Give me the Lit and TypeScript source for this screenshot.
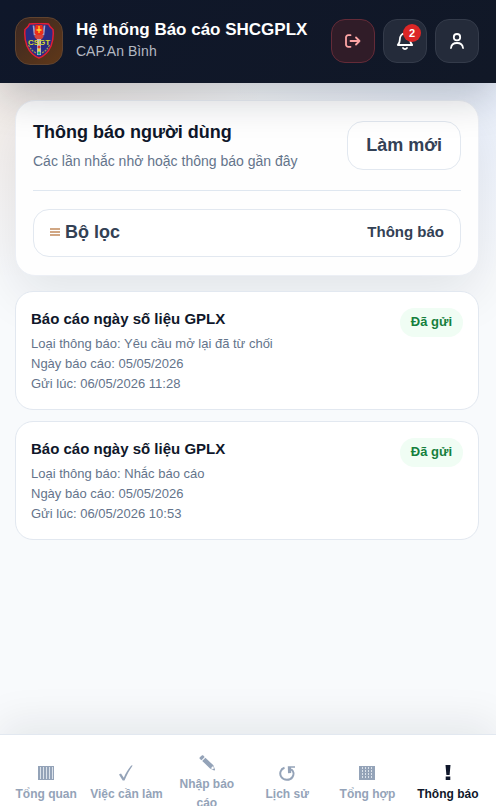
import { LitElement, html, svg, css } from "lit";
import { customElement, property } from "lit/decorators.js";
import { classMap } from "lit/directives/class-map.js";

interface Notice {
  title: string;
  kind: string;
  day: string;
  sent: string;
  status: string;
}

const notices: Notice[] = [
  { title: "Báo cáo ngày số liệu GPLX", kind: "Yêu cầu mở lại đã từ chối", day: "05/05/2026", sent: "06/05/2026 11:28", status: "Đã gửi" },
  { title: "Báo cáo ngày số liệu GPLX", kind: "Nhắc báo cáo", day: "05/05/2026", sent: "06/05/2026 10:53", status: "Đã gửi" },
];

const navIcons = {
  columns: svg`<path d="M0 1h16v14H0z" fill="currentColor"/><path d="M2.500 2v12M5.500 2v12M8.500 2v12M11.500 2v12M14.500 2v12" stroke="#dbe2ea" stroke-width="1"/>`,
  check: svg`<path d="M1 9.500l2-1 2.800 4.200C7.500 8.500 10 4.200 13.200.500h1.500C11.500 5 8.800 9.800 6.500 15.500H4.700z" fill="currentColor"/>`,
  pencil: svg`<path d="M.8 2.200 2.800.600c.5-.4 1.300-.3 1.700.1l1.200 1.300-3.200 3.200L.9 4c-.5-.5-.6-1.300-.1-1.800zM3.200 5.900l3.200-3.200 8 7.600 1.600 4.200c.2.600-.3 1.100-.9.900l-4.100-2z" fill="currentColor"/><path d="M11.800 13.200l2.300-2.200.9 2.300-1.200 1z" fill="#fff"/>`,
  history: svg`<path d="M5.500 2.800C1.500 4 .2 8.500 2.200 11.800c2.600 4 8.800 3.900 11.200.3 1.900-2.900 1.200-6.100-1.300-7.900" fill="none" stroke="currentColor" stroke-width="2"/><path d="M8.800 1.200H16v1.600h-4l.2 5.200-3.200.2z" fill="currentColor"/>`,
  grid: svg`<path d="M0 1h16v14H0z" fill="currentColor"/><path d="M3.500 2v12M6.500 2v12M9.500 2v12M12.500 2v12" stroke="#dbe2ea" stroke-width="1" stroke-dasharray="2 1"/>`,
  alert: svg`<path d="M5.500 0h5l-.9 10H6.400zM5.700 11.500h4.600V15H5.700z" fill="currentColor"/>`,
};

@customElement("notice-card")
export class NoticeCard extends LitElement {
  @property({ attribute: false }) notice!: Notice;

  static styles = css`
    :host { display: block; }
    .card {
      display: flex; align-items: flex-start; justify-content: space-between; gap: 12px;
      box-sizing: border-box; padding: 16px 15px 15px; border: 1px solid #e2e8f0;
      border-radius: 18px; background: #fff;
    }
    .title { margin: 0 0 4px; font-size: 15px; line-height: 22px; font-weight: 700; color: #0f172a; }
    .line { margin: 0; font-size: 13px; line-height: 20px; color: #64748b; }
    .badge {
      flex: none; padding: 3px 11px 5px; border-radius: 15px; background: #f0fdf4;
      color: #15803d; font-size: 13px; line-height: 21px; font-weight: 700;
    }
  `;

  render() {
    const n = this.notice;
    return html`<article class="card">
      <div>
        <h2 class="title">${n.title}</h2>
        <p class="line">Loại thông báo: ${n.kind}</p>
        <p class="line">Ngày báo cáo: ${n.day}</p>
        <p class="line">Gửi lúc: ${n.sent}</p>
      </div>
      <span class="badge">${n.status}</span>
    </article>`;
  }
}

@customElement("bottom-nav")
export class BottomNav extends LitElement {
  private items = [
    { label: "Tổng quan", icon: navIcons.columns },
    { label: "Việc cần làm", icon: navIcons.check },
    { label: "Nhập báo cáo", icon: navIcons.pencil },
    { label: "Lịch sử", icon: navIcons.history },
    { label: "Tổng hợp", icon: navIcons.grid },
    { label: "Thông báo", icon: navIcons.alert, active: true },
  ];

  static styles = css`
    :host { display: block; position: sticky; bottom: 0; z-index: 3; margin-top: auto; }
    .bar {
      box-sizing: border-box; height: 72px; overflow: hidden; padding: 14px 8px 0 6px;
      border-top: 1px solid #e2e8f0; background: #fff;
    }
    .shade { box-shadow: 0 -12px 40px rgba(15, 23, 42, 0.08); }
    .items { display: grid; grid-template-columns: repeat(6, minmax(0, 1fr)); height: 70px; }
    .item {
      display: flex; flex-direction: column; align-items: center; justify-content: center; gap: 4px;
      padding: 0 3px; color: #94a3b8; font-size: 12px; line-height: 19px; font-weight: 700;
      text-align: center; text-decoration: none;
    }
    .active { color: #0f172a; }
    .icon { width: 16px; height: 16px; flex: none; }
  `;

  render() {
    return html`<div class="shade"><nav class="bar"><div class="items">
      ${this.items.map((i) => html`<a href="#" class=${classMap({ item: true, active: !!i.active })}>
        <svg class="icon" viewBox="0 0 16 16" aria-hidden="true">${i.icon}</svg>
        <span>${i.label}</span>
      </a>`)}
    </div></nav></div>`;
  }
}

@customElement("app-root")
export class AppRoot extends LitElement {
  static styles = css`
    :host {
      display: flex; flex-direction: column; min-height: 100vh;
      font-family: "Liberation Sans", Arial, sans-serif; color: #0f172a;
      background:
        radial-gradient(circle at 0 0, rgba(180, 83, 9, 0.12), transparent 280px),
        radial-gradient(circle at 100% 0, rgba(37, 99, 235, 0.1), transparent 280px),
        #f8fafc;
    }
    .header {
      display: flex; align-items: center; position: relative; z-index: 2; box-sizing: border-box;
      height: 83px; padding: 0 17px 2px 15px; background: linear-gradient(135deg, #0f172a, #111827);
      box-shadow: 0 14px 40px rgba(15, 23, 42, 0.22);
    }
    .logo {
      display: grid; place-items: center; flex: none; box-sizing: border-box; width: 48px; height: 48px;
      border: 1px solid #60432f; border-radius: 15px; background: linear-gradient(135deg, #3b2823, #603818);
    }
    .brand { flex: 1; min-width: 0; margin-left: 13px; padding-bottom: 2px; }
    .name { margin: 0; font-size: 17px; line-height: 22px; font-weight: 700; color: #fff; white-space: nowrap; }
    .unit { margin: 0; font-size: 14px; line-height: 20px; color: #b3b8c2; }
    .actions { display: flex; gap: 8px; }
    .action {
      position: relative; display: grid; place-items: center; box-sizing: border-box;
      width: 44px; height: 44px; padding: 0; border: 1px solid #343b4a; border-radius: 14px;
      background: #242b3a; color: #fff;
    }
    .exit { border-color: #642b38; background: #301c28; color: #fda4a4; }
    .glyph { width: 20px; height: 20px; }
    .count {
      position: absolute; top: 4px; right: 5px; width: 18px; height: 18px; border-radius: 9px;
      background: #dc2626; font-size: 11px; line-height: 18px; font-weight: 700; text-align: center;
    }
    .main { display: flex; flex-direction: column; gap: 11px; padding: 17px 17px 24px 15px; }
    .panel {
      box-sizing: border-box; margin-bottom: 4px; padding: 20px 17px 18px; border: 1px solid #eceff5;
      border-radius: 20px; background: #fefefe; box-shadow: 0 20px 50px rgba(15, 23, 42, 0.09);
    }
    .head {
      display: flex; align-items: flex-start; justify-content: space-between; gap: 12px;
      padding-bottom: 19px; border-bottom: 1px solid #dfe7f0;
    }
    .heading { margin: 0; font-size: 18px; line-height: 22px; font-weight: 700; }
    .sub { margin: 8px 0 0; font-size: 14px; line-height: 20px; color: #64748b; }
    .refresh, .filter {
      box-sizing: border-box; border: 1px solid #e2e8f0; border-radius: 16px; background: #fff;
      color: #334155; font-family: inherit; font-size: 18px; line-height: 22px; font-weight: 700;
    }
    .refresh { height: 49px; padding: 0 18px 2px; white-space: nowrap; }
    .filter {
      display: flex; align-items: center; width: 100%; height: 48px; margin-top: 18px; padding: 0 16px 2px;
    }
    .bars { width: 10px; height: 8px; margin-right: 5px; }
    .current { margin-left: auto; font-size: 15px; }
  `;

  render() {
    return html`
      <header class="header">
        <div class="logo">
          <svg width="30" height="36" viewBox="0 0 30 36" role="img" aria-label="CSGT">
            <path d="M5.500 1Q10 .5 15 .5T24.500 1Q25.500 4 29 6.500 30 15 27 23 23 32 15 35 7 32 3 23 0 15 1 6.500 4.500 4 5.500 1z" fill="#292c83" stroke="#e31d35" stroke-width="1.500"/>
            <path d="M9.500 2.500l1 9h9l1-9" fill="none" stroke="#a9a1c1" stroke-width="1.700"/>
            <path d="M11.500 2h7l1 8-2 3h-5l-2-3z" fill="#ed2e1c"/>
            <path d="M15 3v7M12.500 7h5" stroke="#ffd52e" stroke-width="1.300"/>
            <path d="M10.500 12h9v2l-2.500 3h-4l-2.500-3z" fill="#d6443d"/>
            <path d="M13 16h4v16h-4z" fill="#b9b3c9"/>
            <path d="M4.500 22c2 4 4 6 7.500 8M25.500 22c-2 4-4 6-7.500 8" fill="none" stroke="#a59a4a" stroke-width="1.300" stroke-dasharray="2 1"/>
            <circle cx="15" cy="24" r="1.500" fill="#dd3328"/><circle cx="15" cy="27" r="1.500" fill="#e9d839"/><circle cx="15" cy="30" r="1.500" fill="#15a776"/>
            <text x="15" y="21.500" text-anchor="middle" fill="#d8d92f" font-size="8" font-weight="700">CSGT</text>
          </svg>
        </div>
        <div class="brand">
          <h1 class="name">Hệ thống Báo cáo SHCGPLX</h1>
          <p class="unit">CAP.An Bình</p>
        </div>
        <div class="actions">
          <button class="action exit" aria-label="Đăng xuất">
            <svg class="glyph" viewBox="0 0 20 20" fill="none" stroke="currentColor" stroke-width="1.800" stroke-linecap="round" stroke-linejoin="round">
              <path d="M7.500 4.200H5.200A2.200 2.200 0 0 0 3 6.400v7.200a2.200 2.200 0 0 0 2.200 2.200h2.300M7.500 10h9M13 6.500l3.500 3.500-3.500 3.500"/>
            </svg>
          </button>
          <button class="action" aria-label="Thông báo">
            <svg class="glyph" viewBox="0 0 20 20" fill="none" stroke="currentColor" stroke-width="1.800" stroke-linecap="round" stroke-linejoin="round">
              <path d="M2.800 14h14.400c-1.500-1.300-2-2.600-2-5.200C15.200 5 13.300 2.500 10 2.500S4.800 5 4.800 8.800c0 2.600-.5 3.900-2 5.200zM8 17c1 1.400 3 1.400 4 0"/>
            </svg>
            <span class="count">2</span>
          </button>
          <button class="action" aria-label="Tài khoản">
            <svg class="glyph" viewBox="0 0 20 20" fill="none" stroke="currentColor" stroke-width="1.800" stroke-linecap="round">
              <circle cx="10" cy="6.200" r="3.200"/><path d="M4 17c.4-3.400 2.500-5 6-5s5.600 1.600 6 5"/>
            </svg>
          </button>
        </div>
      </header>
      <main class="main">
        <section class="panel">
          <div class="head">
            <div>
              <h2 class="heading">Thông báo người dùng</h2>
              <p class="sub">Các lần nhắc nhở hoặc thông báo gần đây</p>
            </div>
            <button class="refresh">Làm mới</button>
          </div>
          <button class="filter" aria-expanded="false">
            <svg class="bars" viewBox="0 0 10 8" aria-hidden="true"><path d="M0 1h10M0 4h10M0 7h10" stroke="#c28a5c" stroke-width="1.500"/></svg>
            <span>Bộ lọc</span>
            <span class="current">Thông báo</span>
          </button>
        </section>
        ${notices.map((n) => html`<notice-card .notice=${n}></notice-card>`)}
      </main>
      <bottom-nav></bottom-nav>
    `;
  }
}
